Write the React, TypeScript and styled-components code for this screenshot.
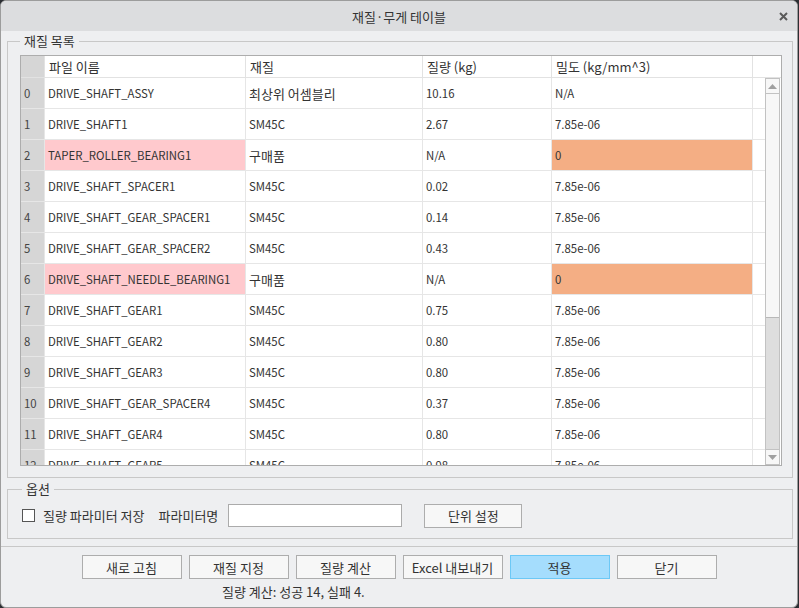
import styled, { createGlobalStyle } from 'styled-components';

const GlobalStyle = createGlobalStyle`
  html, body {
    margin: 0;
    padding: 0;
    background: #2c2f33;
  }
  body {
    font-family: "Noto Sans CJK KR", "Noto Sans", sans-serif;
    font-size: 13px;
    color: #333333;
  }
`;

type Row = {
  name: string;
  material: string;
  mass: string;
  density: string;
  missing?: boolean;
};

const rows: Row[] = [
  { name: 'DRIVE_SHAFT_ASSY', material: '최상위 어셈블리', mass: '10.16', density: 'N/A' },
  { name: 'DRIVE_SHAFT1', material: 'SM45C', mass: '2.67', density: '7.85e-06' },
  { name: 'TAPER_ROLLER_BEARING1', material: '구매품', mass: 'N/A', density: '0', missing: true },
  { name: 'DRIVE_SHAFT_SPACER1', material: 'SM45C', mass: '0.02', density: '7.85e-06' },
  { name: 'DRIVE_SHAFT_GEAR_SPACER1', material: 'SM45C', mass: '0.14', density: '7.85e-06' },
  { name: 'DRIVE_SHAFT_GEAR_SPACER2', material: 'SM45C', mass: '0.43', density: '7.85e-06' },
  { name: 'DRIVE_SHAFT_NEEDLE_BEARING1', material: '구매품', mass: 'N/A', density: '0', missing: true },
  { name: 'DRIVE_SHAFT_GEAR1', material: 'SM45C', mass: '0.75', density: '7.85e-06' },
  { name: 'DRIVE_SHAFT_GEAR2', material: 'SM45C', mass: '0.80', density: '7.85e-06' },
  { name: 'DRIVE_SHAFT_GEAR3', material: 'SM45C', mass: '0.80', density: '7.85e-06' },
  { name: 'DRIVE_SHAFT_GEAR_SPACER4', material: 'SM45C', mass: '0.37', density: '7.85e-06' },
  { name: 'DRIVE_SHAFT_GEAR4', material: 'SM45C', mass: '0.80', density: '7.85e-06' },
  { name: 'DRIVE_SHAFT_GEAR5', material: 'SM45C', mass: '0.98', density: '7.85e-06' },
];

const buttons = ['새로 고침', '재질 지정', '질량 계산', 'Excel 내보내기', '적용', '닫기'];

// hangul text renders with the larger size, latin-only text with the smaller one
const isKorean = (s: string) => /[가-힣]/.test(s);

function Arrow({ down }: { down?: boolean }) {
  return (
    <svg width="9" height="5" viewBox="0 0 9 5">
      <path d={down ? 'M0 0 H9 L4.5 5 Z' : 'M0 5 H9 L4.5 0 Z'} fill="#a0a0a0" />
    </svg>
  );
}

export default function App() {
  return (
    <>
      <GlobalStyle />
      <Dialog>
        <TitleBar>
          <Title>재질·무게 테이블</Title>
          <Close>
            <svg width="9" height="9" viewBox="0 0 9 9">
              <path d="M1 1 L8 8 M8 1 L1 8" stroke="#5a5a5a" strokeWidth="2" />
            </svg>
          </Close>
        </TitleBar>
        <Content>
          <Group>
            <Legend>재질 목록</Legend>
            <TableFrame>
              <HeaderRow>
                <IndexCell />
                <HeadCell $w={201}>파일 이름</HeadCell>
                <HeadCell $w={177}>재질</HeadCell>
                <HeadCell $w={129}>질량 (kg)</HeadCell>
                <HeadCell $w={201}>밀도 (kg/mm^3)</HeadCell>
                <HeadCell $w={27} />
              </HeaderRow>
              <Body>
                <Viewport>
                  {rows.map((r, i) => (
                    <BodyRow key={i}>
                      <IndexCell>{i}</IndexCell>
                      <Cell $w={201} $bg={r.missing ? '#ffc9cd' : undefined}>{r.name}</Cell>
                      <Cell $w={177} $kr={isKorean(r.material)}>{r.material}</Cell>
                      <Cell $w={129}>{r.mass}</Cell>
                      <Cell $w={201} $bg={r.missing ? '#f4ae84' : undefined}>{r.density}</Cell>
                      <Cell $w={12} />
                    </BodyRow>
                  ))}
                </Viewport>
                <Scrollbar>
                  <ScrollButton><Arrow /></ScrollButton>
                  <Thumb />
                  <Track />
                  <ScrollButton><Arrow down /></ScrollButton>
                </Scrollbar>
              </Body>
            </TableFrame>
          </Group>
          <OptionGroup>
            <Legend>옵션</Legend>
            <OptionRow>
              <CheckLabel>
                <CheckBox />
                질량 파라미터 저장
              </CheckLabel>
              <FieldLabel>파라미터명</FieldLabel>
              <TextInput />
              <Button $w={98}>단위 설정</Button>
            </OptionRow>
          </OptionGroup>
        </Content>
        <Footer>
          <ButtonRow>
            {buttons.map((b) => (
              <Button key={b} $w={100} $primary={b === '적용'}>
                {b}
              </Button>
            ))}
          </ButtonRow>
          <Status>질량 계산: 성공 14, 실패 4.</Status>
        </Footer>
      </Dialog>
    </>
  );
}

const Dialog = styled.div`
  width: 796px;
  height: 606px;
  background: #eeeff1;
  border: 1px solid #9c9c9c;
  border-radius: 6px;
  overflow: hidden;
  display: flex;
  flex-direction: column;
`;

const TitleBar = styled.div`
  height: 30px;
  flex: none;
  background: #dcdddf;
  display: flex;
  align-items: center;
  justify-content: center;
  position: relative;
`;

const Title = styled.div`
  font-size: 13px;
  color: #333;
`;

const Close = styled.div`
  position: absolute;
  right: 9px;
  top: 11px;
  display: flex;
`;

const Content = styled.div`
  padding: 2px 4px 0 6px;
  display: flex;
  flex-direction: column;
  gap: 3px;
`;

const Group = styled.fieldset`
  margin: 0;
  min-width: 0;
  border: 1px solid #c8c8c8;
  padding: 6px 10px 11px 12px;
`;

const OptionGroup = styled(Group)`
  padding: 7px 10px 11px 14px;
`;

const Legend = styled.legend`
  margin-left: 0;
  padding: 0 4px;
  font-size: 13px;
  line-height: 16px;
  color: #333;
`;

const TableFrame = styled.div`
  border: 1px solid #adadad;
  background: #fff;
`;

const HeaderRow = styled.div`
  display: flex;
  height: 21px;
  border-bottom: 1px solid #e2e2e2;
`;

const HeadCell = styled.div<{ $w: number }>`
  width: ${(p) => p.$w}px;
  flex: none;
  box-sizing: border-box;
  padding-left: 4px;
  line-height: 21px;
  border-left: 1px solid #e2e2e2;
  white-space: nowrap;
`;

const IndexCell = styled.div`
  width: 23px;
  flex: none;
  box-sizing: border-box;
  padding-left: 3px;
  background: #d6d6d6;
  color: #444;
  font-size: 11.4px;
  display: flex;
  align-items: center;
`;

const Body = styled.div`
  display: flex;
  height: 387px;
`;

const Viewport = styled.div`
  flex: 1;
  overflow: hidden;
`;

const BodyRow = styled.div`
  display: flex;
  height: 30px;
  border-bottom: 1px solid #e6e6e6;
`;

const Cell = styled.div<{ $w: number; $bg?: string; $kr?: boolean }>`
  width: ${(p) => p.$w}px;
  flex: none;
  box-sizing: border-box;
  padding-left: 3px;
  display: flex;
  align-items: center;
  font-size: ${(p) => (p.$kr ? '13px' : '11.4px')};
  background: ${(p) => p.$bg || '#fff'};
  border-left: 1px solid #e6e6e6;
  white-space: nowrap;
`;

const Scrollbar = styled.div`
  width: 15px;
  flex: none;
  margin-right: 1px;
  display: flex;
  flex-direction: column;
  background: #dedede;
  box-sizing: border-box;
  border: 1px solid #c2c2c2;
`;

const ScrollButton = styled.div`
  height: 14px;
  flex: none;
  background: #f7f7f7;
  display: flex;
  align-items: center;
  justify-content: center;
  border-bottom: 1px solid #c2c2c2;
  &:last-child {
    border-bottom: none;
    border-top: 1px solid #c2c2c2;
  }
`;

const Thumb = styled.div`
  height: 223px;
  flex: none;
  background: #f7f7f7;
  border-bottom: 1px solid #b8b8b8;
`;

const Track = styled.div`
  flex: 1;
`;

const OptionRow = styled.div`
  display: flex;
  align-items: center;
  height: 23px;
`;

const CheckLabel = styled.label`
  display: flex;
  align-items: center;
  gap: 8px;
  margin-right: 14px;
`;

const CheckBox = styled.span`
  width: 11px;
  height: 11px;
  border: 1px solid #555;
  background: #fff;
`;

const FieldLabel = styled.span`
  margin-right: 10px;
`;

const TextInput = styled.div`
  width: 172px;
  height: 21px;
  border: 1px solid #ababab;
  background: #fff;
  margin-right: 22px;
`;

const Button = styled.button<{ $w: number; $primary?: boolean }>`
  width: ${(p) => p.$w}px;
  height: 24px;
  box-sizing: border-box;
  padding: 0;
  font-family: inherit;
  font-size: 13px;
  color: #333;
  background: ${(p) => (p.$primary ? '#a5ddfd' : '#f7f7f7')};
  border: 1px solid ${(p) => (p.$primary ? '#6cc8f6' : '#adadad')};
`;

const Footer = styled.div`
  margin-top: 7px;
  border-top: 1px solid #c8c8c8;
  padding-top: 8px;
  display: flex;
  flex-direction: column;
`;

const ButtonRow = styled.div`
  display: flex;
  justify-content: center;
  gap: 7px;
`;

const Status = styled.div`
  margin-top: 5px;
  padding-left: 221px;
  line-height: 16px;
`;
